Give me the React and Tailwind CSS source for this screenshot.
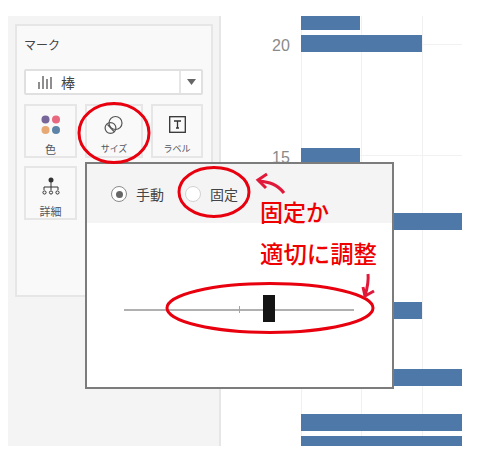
const jp = { fontFamily: '"Noto Sans CJK JP", "Liberation Sans", sans-serif' };

function Card({ label, children, small }) {
  return (
    <div className="flex h-[54px] flex-col items-center border-2 border-[#e6e6e6] bg-[#f9f9f9]">
      <div className="flex h-[33px] w-full items-center justify-center pt-1">{children}</div>
      <div className={`mt-[3px] leading-[14px] text-[#50565e] ${small ? "text-[9px]" : "text-[11px]"}`} style={jp}>{label}</div>
    </div>
  );
}

function Bar({ w, mt, h = "h-[17px]" }) {
  return <div className={`relative bg-[#4e78a8] ${w} ${mt} ${h}`} />;
}

export default function App() {
  return (
    <div className="relative flex h-[458px] w-[478px] overflow-hidden bg-white pl-2 pt-4" style={jp}>
      {/* Sidebar */}
      <div className="h-[430px] w-[213px] border-r-2 border-[#e6e6e6] bg-[#f4f4f4] px-[7px] pt-2">
        <div className="h-[273px] w-[198px] border-2 border-[#e6e6e6] bg-[#f9f9f9] px-[7px] pt-[9px]">
          <div className="text-[12px] leading-[20px] text-[#444]">マーク</div>
          <div className="mt-[14px] flex h-[26px] w-[179px] items-center rounded-[2px] border-2 border-[#e0e0e0] bg-white">
            <svg width="15" height="14" viewBox="0 0 15 14" className="ml-[12px]" stroke="#444" strokeWidth="1.2">
              <path d="M1 7v7M5 1v13M9 4v10M13 2v12" fill="none" />
            </svg>
            <span className="ml-[8px] text-[14px] leading-none text-[#444]">棒</span>
            <div className="ml-auto flex h-full w-[22px] items-center justify-center border-l-2 border-[#e6e6e6]">
              <svg width="9" height="6" viewBox="0 0 9 6"><path d="M0 0h9L4.5 6z" fill="#666" /></svg>
            </div>
          </div>
          <div className="mt-[9px] grid grid-cols-[53px_58px_52px] gap-2">
            <Card label="色">
              <svg width="20" height="20" viewBox="0 0 20 20">
                <circle cx="4.5" cy="4.5" r="4" fill="#77669a" />
                <circle cx="15" cy="4.5" r="4" fill="#e8687f" />
                <circle cx="4.5" cy="15" r="4" fill="#e8a873" />
                <circle cx="15" cy="15" r="4" fill="#5d84a6" />
              </svg>
            </Card>
            <Card label="サイズ" small>
              <svg width="20" height="20" viewBox="0 0 20 20" fill="none" stroke="#555" strokeWidth="1.2">
                <circle cx="11.5" cy="8" r="6.5" />
                <circle cx="6.5" cy="13" r="5.4" />
                <path d="M3.5 9.5l6.5 7" />
              </svg>
            </Card>
            <Card label="ラベル" small>
              <svg width="17" height="17" viewBox="0 0 17 17" fill="none" stroke="#333" strokeWidth="1.3">
                <rect x="0.7" y="0.7" width="15.6" height="15.6" />
                <path d="M5 5h7M8.5 5v7M7 12h3" />
              </svg>
            </Card>
            <Card label="詳細">
              <svg width="18" height="20" viewBox="0 0 18 20" fill="none" stroke="#333" strokeWidth="1">
                <circle cx="9" cy="3" r="2.5" fill="#333" stroke="none" />
                <path d="M9 5v8M2 13v-3h14v3" />
                <circle cx="2.5" cy="15.5" r="1.6" />
                <circle cx="9" cy="15.5" r="1.6" />
                <circle cx="15.5" cy="15.5" r="1.6" />
              </svg>
            </Card>
          </div>
        </div>
      </div>

      {/* Chart */}
      <div className="relative ml-[80px] h-[430px] w-[161px]">
        <div className="absolute left-0 top-0 h-full w-px bg-[#f1f1f1]" />
        <div className="absolute left-[60px] top-0 h-full w-px bg-[#f1f1f1]" />
        <div className="absolute left-[121px] top-0 h-full w-px bg-[#f1f1f1]" />
        <div className="absolute left-0 top-[28px] h-px w-full bg-[#f1f1f1]" />
        <div className="absolute left-0 top-[139px] h-px w-full bg-[#f1f1f1]" />
        <div className="absolute -left-[29px] top-[21px] text-[16px] leading-[18px] text-[#8a8a8a]" style={{ fontFamily: '"Liberation Sans", sans-serif' }}>20</div>
        <div className="absolute -left-[29px] top-[133px] text-[16px] leading-[18px] text-[#8a8a8a]" style={{ fontFamily: '"Liberation Sans", sans-serif' }}>15</div>
        <Bar w="w-[59px]" mt="mt-0" h="h-[14px]" />
        <Bar w="w-[121px]" mt="mt-[5px]" />
        <Bar w="w-[59px]" mt="mt-[96px]" />
        <Bar w="w-full" mt="mt-[48px]" />
        <Bar w="w-[121px]" mt="mt-[72px]" />
        <Bar w="w-full" mt="mt-[50px]" />
        <Bar w="w-full" mt="mt-[28px]" />
        <Bar w="w-full" mt="mt-[5px]" h="h-[10px]" />
      </div>

      {/* Popup */}
      <div className="absolute left-[85px] top-[162px] flex h-[227px] w-[309px] flex-col border-2 border-[#7c7c7c] bg-white">
        <div className="flex h-[59px] items-center bg-[#f4f4f4] pl-[24px] pt-[1px]">
          <span className="flex h-[16px] w-[16px] items-center justify-center rounded-full border border-[#8a8a8a] bg-white">
            <span className="h-[7px] w-[7px] rounded-full bg-[#666]" />
          </span>
          <span className="ml-[9px] text-[14px] leading-none text-[#444]">手動</span>
          <span className="ml-[21px] h-[16px] w-[16px] rounded-full border border-[#d2d2d2] bg-white" />
          <span className="ml-[9px] text-[14px] leading-none text-[#444]">固定</span>
        </div>
        <div className="relative ml-[37px] mt-[72px] flex h-[27px] w-[230px] items-center">
          <div className="mt-[2px] h-[2px] w-full bg-[#b0b0b0]" />
          <div className="absolute left-[115px] top-[11px] h-[7px] w-px bg-[#a5a5a5]" />
          <div className="absolute left-[139px] top-0 h-[27px] w-[12px] bg-[#141414]" />
        </div>
      </div>

      {/* Annotations */}
      <svg className="pointer-events-none absolute left-0 top-0" width="478" height="458" fill="none" stroke="#e8000e" strokeWidth="3">
        <ellipse cx="114" cy="133" rx="35" ry="29.5" />
        <ellipse cx="214" cy="192" rx="35" ry="24.5" />
        <ellipse cx="270" cy="308" rx="103" ry="24.5" />
        <path d="M284 193C277 184 269 182 259 181" stroke="#e0183a" />
        <path d="M267 174L258 180L266 188" stroke="#e0183a" />
        <path d="M368 274C369 282 367 289 365 296" stroke="#e0183a" />
        <path d="M363 287L365 296L374 291" stroke="#e0183a" />
      </svg>
      <div className="absolute left-[260px] top-[198px] text-[23px] font-medium leading-[26px] text-[#ee0000]">固定か</div>
      <div className="absolute left-[260px] top-[240px] text-[23.4px] font-medium leading-[26px] text-[#ee0000]">適切に調整</div>
    </div>
  );
}
